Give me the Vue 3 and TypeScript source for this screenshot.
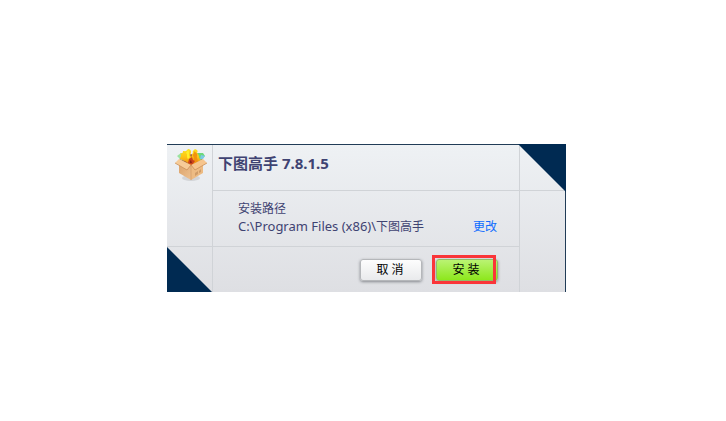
<script setup lang="ts">
import { ref } from 'vue'

const product = ref('下图高手')
const version = ref('7.8.1.5')
const folder = ref('C:\\Program Files (x86)\\')
</script>

<template>
  <main class="page">
    <section class="dialog" aria-labelledby="title">
      <div class="cell logo">
        <svg viewBox="0 0 36 36" width="36" height="36" aria-hidden="true">
          <defs>
            <linearGradient id="fire" x1="0" y1="0" x2="0" y2="1">
              <stop offset="0" stop-color="#fbe21e" />
              <stop offset=".5" stop-color="#fdc313" />
              <stop offset="1" stop-color="#f08a12" />
            </linearGradient>
            <linearGradient id="front" x1="0" y1="0" x2="1" y2="1">
              <stop offset="0" stop-color="#d9a068" />
              <stop offset="1" stop-color="#eec190" />
            </linearGradient>
          </defs>
          <ellipse cx="18" cy="31" rx="9" ry="3" fill="#b9bbc0" opacity=".5" />
          <path d="M6 12 18 7 30 12 18 20Z" fill="#a8653a" />
          <path d="M4 9 8 6 15 6 15 14 8 13Z" fill="#9be3a0" />
          <path d="M24 6 30 6 32 9 27 14 22 12Z" fill="#6bd77c" />
          <path d="M28 8 32 9 30 12 27 12Z" fill="#7cc9e6" />
          <path d="M7 12C7 10 9 9 7 6C9 7 10 6 10 4C12 4 13 5 15 2C18 2 19 5 17 8L18 10C20 9 18 7 20 6C19 4 21 3 22 2C25 3 25 4 24 6C27 8 25 11 28 13L22 16L18 18L12 14Z" fill="url(#fire)" />
          <path d="M21 4C23 6 25 6 24 9C23 11 26 12 24 15L21 16C19 14 22 11 20 9C19 7 22 7 21 4Z" fill="#f2930f" />
          <path d="M15 3C17 5 15 8 17 10L15 12C13 10 15 7 13 6Z" fill="#fff02a" />
          <path d="M16 12 19 10 20 13 22 14 19 18 15 16Z" fill="#cc431c" />
          <path d="M17 14 18 13 19 16 17 16Z" fill="#8d2716" />
          <path d="M6 13 18 19V33L6 26Z" fill="url(#front)" />
          <path d="M18 19 30 13V26L18 33Z" fill="#edbb83" />
          <path d="M6 12 18 18 14 23 2 16Z" fill="#f6cb97" />
          <path d="M30 12 18 18 22 23 34 16Z" fill="#f6c58e" />
          <path d="M2 16 14 23 18 18 22 23 34 16" fill="none" stroke="#c98f59" stroke-width=".8" />
          <path d="M18 19V33" stroke="#cc955f" stroke-width=".6" />
          <path d="M22 26 25 24V27L22 29ZM26 24 28 22V25L26 26Z" fill="#cf9c68" />
        </svg>
      </div>
      <header class="cell head">
        <h1 id="title">{{ product }} {{ version }}</h1>
      </header>
      <div class="cell edge-top"></div>

      <div class="cell side"></div>
      <div class="cell body">
        <div class="label">安装路径</div>
        <div class="row">
          <span><span class="latin">{{ folder }}</span>{{ product }}</span>
          <a href="#">更改</a>
        </div>
      </div>
      <div class="cell edge"></div>

      <div class="cell side-end"></div>
      <footer class="cell foot">
        <button type="button">取 消</button>
        <div class="target">
          <button type="button" class="primary">安 装</button>
          <span class="marker"></span>
        </div>
      </footer>
      <div class="cell edge"></div>
    </section>
  </main>
</template>

<style>
body {
  margin: 0;
  background: #fff;
}
</style>

<style scoped>
.page {
  box-sizing: border-box;
  min-height: 100vh;
  display: flex;
  align-items: center;
  justify-content: center;
  padding: 15px 0 0 7px;
  font-family: "Noto Sans", "Noto Sans CJK SC", sans-serif;
  font-size: 12px;
  line-height: 18px;
  color: #3f4372;
}
.dialog {
  position: relative;
  box-sizing: border-box;
  width: 100%;
  max-width: 399px;
  display: grid;
  grid-template-columns: 46px 1fr 46px;
  grid-template-rows: 46px 56px 45px;
  border-top: 1px solid #213c57;
  background: linear-gradient(#eef1f4, #dedfe3);
}
.dialog::before,
.dialog::after {
  content: "";
  position: absolute;
  width: 45px;
  height: 45px;
  background: #002a52;
}
.dialog::before {
  left: 0;
  bottom: 0;
  clip-path: polygon(0 0, 100% 100%, 0 100%);
}
.dialog::after {
  top: -1px;
  right: 0;
  width: 48px;
  height: 48px;
  clip-path: polygon(0 0, 100% 0, 100% 100%);
}
.cell {
  box-sizing: border-box;
  border: 0 solid #d0d3d7;
}
.logo {
  padding: 2px 0 0 6px;
  border-right-width: 1px;
}
.logo svg {
  display: block;
}
.head {
  padding: 7px 5px 0;
  border-right-width: 1px;
  border-bottom-width: 1px;
}
h1 {
  margin: 0;
  font-size: 15px;
  line-height: 22px;
  font-weight: 700;
  white-space: nowrap;
}
.edge-top {
  border-bottom-width: 1px;
  border-right: 1px solid #213c57;
}
.edge {
  border-right: 1px solid #213c57;
}
.side {
  border-right-width: 1px;
  border-bottom-width: 1px;
}
.side-end {
  border-right-width: 1px;
}
.body {
  padding: 9px 22px 0 25px;
  border-right-width: 1px;
  border-bottom-width: 1px;
}
.row {
  display: flex;
  justify-content: space-between;
  white-space: nowrap;
}
.latin {
  font-size: 13px;
  line-height: 12px;
}
a {
  color: #0f6cff;
  text-decoration: none;
}
.foot {
  display: flex;
  justify-content: flex-end;
  align-items: flex-start;
  gap: 14px;
  padding: 12px 21px 0 0;
  border-right-width: 1px;
}
button {
  box-sizing: border-box;
  display: block;
  width: 62px;
  height: 22px;
  padding: 0 2px 0 0;
  border: 1px solid #b5b7ba;
  border-radius: 3px;
  background: linear-gradient(#fdfdfd, #e9eaec);
  box-shadow: 0 1px 3px #85888d;
  color: #000;
  font: inherit;
  line-height: 18px;
  cursor: pointer;
}
.primary {
  border-color: #91bc69;
  background: linear-gradient(#baf373, #8de71c);
}
.target {
  position: relative;
}
.marker {
  position: absolute;
  top: -4px;
  left: -4px;
  box-sizing: border-box;
  width: 64px;
  height: 29px;
  border: 3px solid #fa3539;
  pointer-events: none;
}
</style>
